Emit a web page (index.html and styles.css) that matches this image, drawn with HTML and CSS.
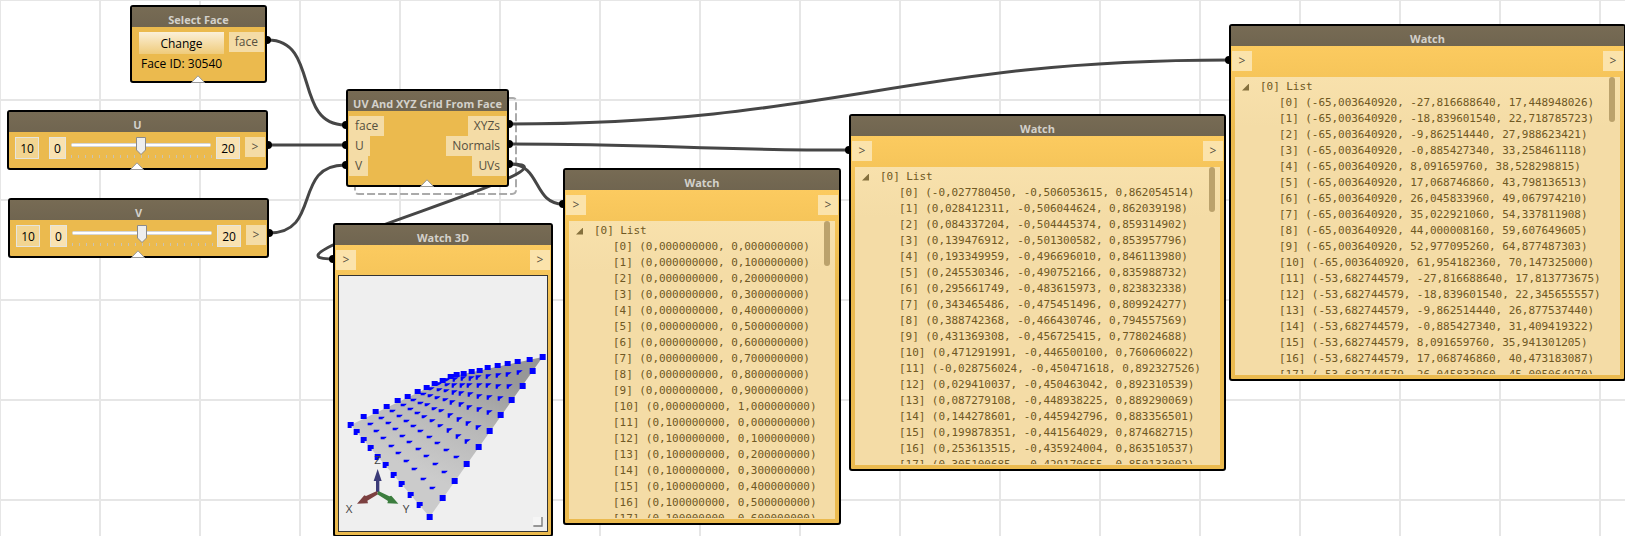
FILE: index.html
```
<!DOCTYPE html>
<html lang="en">
<head>
<meta charset="utf-8">
<title>Node graph</title>
<link rel="stylesheet" href="styles.css">
</head>
<body>
<main class="canvas">
  <svg class="wires" width="1625" height="536" viewBox="0 0 1625 536">
    <path class="selection" d="M508 98H513Q516 98 516 101V190Q516 194 512 194H359Q355 194 355 190V186"/>
    <g class="wire">
      <path d="M268 40C320 40 293 125 345 125"/>
      <path d="M268 145H345"/>
      <path d="M269 233C322 233 292 165 345 165"/>
      <path d="M510 124C834 124 905 60 1229 60"/>
      <path d="M510 144C662 144 697 150 849 150"/>
      <path d="M510 164C541 164 533 204 563 204"/>
      <path d="M510 164C599 164 242 259 333 259"/>
    </g>
    <g class="dots">
      <circle cx="267" cy="40" r="4"/><circle cx="268" cy="145" r="4"/><circle cx="269" cy="233" r="4"/>
      <circle cx="346" cy="125" r="4"/><circle cx="346" cy="145" r="4"/><circle cx="346" cy="165" r="4"/>
      <circle cx="509" cy="124" r="4"/><circle cx="509" cy="144" r="4"/><circle cx="509" cy="164" r="4"/>
      <circle cx="1229" cy="60" r="4"/><circle cx="849" cy="150" r="4"/><circle cx="563" cy="204" r="4"/><circle cx="333" cy="259" r="4"/>
    </g>
  </svg>

  <section class="node select">
    <h2 class="title">Select Face</h2>
    <div class="select-body">
      <div class="select-main"><button class="change">Change</button><p class="face-id">Face ID: 30540</p></div>
      <span class="port">face</span>
    </div>
    <svg class="lip" width="14" height="8"><path d="M.5 7.5L7 .8L13.500 7.500Z"/></svg>
  </section>

  <section class="node slider slider-u">
    <h2 class="title">U</h2>
    <div class="slider-body">
      <span class="box value">10</span><span class="box">0</span>
      <svg class="track" width="142" height="24"><rect class="rail" x=".5" y="6.500" width="139" height="3" rx="1"/><path class="ticks" d="M.5 18v3m7-3v3m7-3v3m7-3v3m7-3v3m7-3v3m7-3v3m7-3v3m7-3v3m7-3v3m7-3v3m7-3v3m7-3v3m7-3v3m7-3v3m7-3v3m7-3v3m7-3v3m7-3v3m7-3v3m7-3v3"/><path class="thumb" d="M65.500 .5h9v12.500l-4.500 4.500l-4.500-4.500Z"/></svg>
      <span class="box">20</span><span class="port arrow">&gt;</span>
    </div>
    <svg class="lip" width="14" height="8"><path d="M.5 7.5L7 .8L13.500 7.500Z"/></svg>
  </section>

  <section class="node slider slider-v">
    <h2 class="title">V</h2>
    <div class="slider-body">
      <span class="box value">10</span><span class="box">0</span>
      <svg class="track" width="142" height="24"><rect class="rail" x=".5" y="6.500" width="139" height="3" rx="1"/><path class="ticks" d="M.5 18v3m7-3v3m7-3v3m7-3v3m7-3v3m7-3v3m7-3v3m7-3v3m7-3v3m7-3v3m7-3v3m7-3v3m7-3v3m7-3v3m7-3v3m7-3v3m7-3v3m7-3v3m7-3v3m7-3v3m7-3v3"/><path class="thumb" d="M65.500 .5h9v12.500l-4.500 4.500l-4.500-4.500Z"/></svg>
      <span class="box">20</span><span class="port arrow">&gt;</span>
    </div>
    <svg class="lip" width="14" height="8"><path d="M.5 7.5L7 .8L13.500 7.500Z"/></svg>
  </section>

  <section class="node uvgrid">
    <h2 class="title">UV And XYZ Grid From Face</h2>
    <div class="ports">
      <div class="inputs"><span class="port">face</span><span class="port">U</span><span class="port">V</span></div>
      <div class="outputs"><span class="port">XYZs</span><span class="port">Normals</span><span class="port">UVs</span></div>
    </div>
    <svg class="lip" width="14" height="8"><path d="M.5 7.5L7 .8L13.500 7.500Z"/></svg>
  </section>

  <section class="node view3d bright">
    <h2 class="title">Watch 3D</h2>
    <div class="ports"><span class="port arrow">&gt;</span><span class="port arrow">&gt;</span></div>
    <div class="viewport">
      <svg width="208" height="255" viewBox="58 198 624 765">
        <defs><linearGradient id="shade" gradientUnits="userSpaceOnUse" x1="480" y1="465" x2="330" y2="800"><stop offset="0" stop-color="#979797"/><stop offset=".5" stop-color="#b8b8b8"/><stop offset="1" stop-color="#cbcbcb"/></linearGradient></defs>
        <path fill="url(#shade)" d="M93 645L393 500L669 441L330 921Z"/>
        <g id="points" fill="#00f"></g>
        <path d="M169 847V813H162L174 777L186 813H179V847Z" fill="#3b3b78"/>
        <path d="M172 843L139 858L134 856L112 881L145 880L143 872L175 853Z" fill="#7c4040"/>
        <path d="M176 843L209 859L215 857L236 881L203 880L205 873L173 853Z" fill="#3b7d3e"/>
        <g class="axis"><text x="78" y="909" textLength="20" lengthAdjust="spacingAndGlyphs">X</text><text x="249" y="909" textLength="20" lengthAdjust="spacingAndGlyphs">Y</text><text x="164" y="762" textLength="20" lengthAdjust="spacingAndGlyphs">Z</text></g>
        <path d="M640 921H668V950H640Z" fill="#f5f5f5"/><path d="M641 948H667V921" fill="none" stroke="#777" stroke-width="4"/>
      </svg>
    </div>
  </section>

  <section class="node watch bright watch-uv">
    <h2 class="title">Watch</h2>
    <div class="ports"><span class="port arrow">&gt;</span><span class="port arrow">&gt;</span></div>
    <div class="panel"><pre class="root"><i class="fold"></i>[0] List</pre><pre class="rows">[0] (0,000000000, 0,000000000)
[1] (0,000000000, 0,100000000)
[2] (0,000000000, 0,200000000)
[3] (0,000000000, 0,300000000)
[4] (0,000000000, 0,400000000)
[5] (0,000000000, 0,500000000)
[6] (0,000000000, 0,600000000)
[7] (0,000000000, 0,700000000)
[8] (0,000000000, 0,800000000)
[9] (0,000000000, 0,900000000)
[10] (0,000000000, 1,000000000)
[11] (0,100000000, 0,000000000)
[12] (0,100000000, 0,100000000)
[13] (0,100000000, 0,200000000)
[14] (0,100000000, 0,300000000)
[15] (0,100000000, 0,400000000)
[16] (0,100000000, 0,500000000)
[17] (0,100000000, 0,600000000)</pre><i class="scroll"></i></div>
  </section>

  <section class="node watch bright watch-normals">
    <h2 class="title">Watch</h2>
    <div class="ports"><span class="port arrow">&gt;</span><span class="port arrow">&gt;</span></div>
    <div class="panel"><pre class="root"><i class="fold"></i>[0] List</pre><pre class="rows">[0] (-0,027780450, -0,506053615, 0,862054514)
[1] (0,028412311, -0,506044624, 0,862039198)
[2] (0,084337204, -0,504445374, 0,859314902)
[3] (0,139476912, -0,501300582, 0,853957796)
[4] (0,193349959, -0,496696010, 0,846113980)
[5] (0,245530346, -0,490752166, 0,835988732)
[6] (0,295661749, -0,483615973, 0,823832338)
[7] (0,343465486, -0,475451496, 0,809924277)
[8] (0,388742368, -0,466430746, 0,794557569)
[9] (0,431369308, -0,456725415, 0,778024688)
[10] (0,471291991, -0,446500100, 0,760606022)
[11] (-0,028756024, -0,450471618, 0,892327526)
[12] (0,029410037, -0,450463042, 0,892310539)
[13] (0,087279108, -0,448938225, 0,889290069)
[14] (0,144278601, -0,445942796, 0,883356501)
[15] (0,199878351, -0,441564029, 0,874682715)
[16] (0,253613515, -0,435924004, 0,863510537)
[17] (0,305100685, -0,429170655, 0,850133002)</pre><i class="scroll"></i></div>
  </section>

  <section class="node watch bright watch-xyz">
    <h2 class="title">Watch</h2>
    <div class="ports"><span class="port arrow">&gt;</span><span class="port arrow">&gt;</span></div>
    <div class="panel"><pre class="root"><i class="fold"></i>[0] List</pre><pre class="rows">[0] (-65,003640920, -27,816688640, 17,448948026)
[1] (-65,003640920, -18,839601540, 22,718785723)
[2] (-65,003640920, -9,862514440, 27,988623421)
[3] (-65,003640920, -0,885427340, 33,258461118)
[4] (-65,003640920, 8,091659760, 38,528298815)
[5] (-65,003640920, 17,068746860, 43,798136513)
[6] (-65,003640920, 26,045833960, 49,067974210)
[7] (-65,003640920, 35,022921060, 54,337811908)
[8] (-65,003640920, 44,000008160, 59,607649605)
[9] (-65,003640920, 52,977095260, 64,877487303)
[10] (-65,003640920, 61,954182360, 70,147325000)
[11] (-53,682744579, -27,816688640, 17,813773675)
[12] (-53,682744579, -18,839601540, 22,345655557)
[13] (-53,682744579, -9,862514440, 26,877537440)
[14] (-53,682744579, -0,885427340, 31,409419322)
[15] (-53,682744579, 8,091659760, 35,941301205)
[16] (-53,682744579, 17,068746860, 40,473183087)
[17] (-53,682744579, 26,045833960, 45,005064970)</pre><i class="scroll"></i></div>
  </section>
</main>
<script src="points.js"></script>
</body>
</html>
```
FILE: points.js
```
// Projected positions of the points along the four edges of the surface.
const left = [[93,645],[111,666],[132,690],[153,714],[174,741],[198,765],[222,795],[246,822],[273,855],[300,885],[330,921]];
const right = [[330,921],[369,864],[405,813],[441,762],[477,711],[510,663],[543,615],[576,570],[609,528],[639,483],[669,441]];
const back = [[93,645],[132,622],[168,606],[201,590],[234,574],[264,562],[294,547],[321,535],[345,523],[369,512],[393,502]];
const top_ = [[393,502],[411,495],[432,492],[456,487],[480,482],[504,475],[534,469],[564,463],[594,457],[630,449],[669,441]];

// The surface is ruled, so every inner point is a crossing of two straight lines.
function cross([ax, ay], [bx, by], [cx, cy], [dx, dy]) {
  const m = (by - ay) / (bx - ax), n = (dy - cy) / (dx - cx);
  const x = (cy - ay + m * ax - n * cx) / (m - n);
  return [x, ay + m * (x - ax)];
}
const snap = v => Math.round(v / 3) * 3;
let d = '';
const square = ([x, y], h) => { d += `M${snap(x) - 9} ${snap(y) - 9}h18v${h}h-18Z`; };
back.slice(1).forEach(p => square(p, 15));
top_.slice(1, 10).forEach(p => square(p, 15));
right.forEach(p => square(p, 18));
left.slice(0, 10).forEach(([x, y]) => { d += `M${x - 9} ${y - 9}h18v12h-6v6h-12Z`; });
for (let i = 1; i < 10; i++) {
  for (let j = 1; j < 10; j++) {
    const [x, y] = cross(left[i], top_[i], back[j], right[j]).map(snap);
    const h = 8 + (i + j > 10 ? 4 : 0);
    d += j < 4 || i + j < 8 ? `M${x - 9} ${y - 4}h18l-3 5h-3v3h-12Z` : `M${x - 9} ${y - 5}h18l-6 5l-5 3l-1 ${h - 7}h-6Z`;
  }
}
const path = document.createElementNS('http://www.w3.org/2000/svg', 'path');
path.setAttribute('d', d);
document.getElementById('points').append(path);
```
FILE: styles.css
```
* { box-sizing: border-box; }
body { margin: 0; overflow: hidden; font: 12px "Open Sans", sans-serif; }

.canvas {
  position: relative;
  width: 1625px;
  height: 536px;
  overflow: hidden;
  background-color: #fff;
  background-image: linear-gradient(90deg, #e6e6e6 2px, transparent 2px), linear-gradient(#e6e6e6 2px, transparent 2px);
  background-size: 100px 100px;
  background-position: -1px -1px;
}
.wires { position: absolute; left: 0; top: 0; }
.wire path { fill: none; stroke: #464646; stroke-width: 3; }
.selection { fill: none; stroke: #aaa; stroke-width: 2; stroke-dasharray: 8 3; }

.node {
  position: absolute;
  border: 2px solid #000;
  border-radius: 3px;
  background: #ebba4e;
}
.bright { background: linear-gradient(#fccb60 18px, #ebba4e 110px); }
.select { left: 130px; top: 5px; width: 137px; height: 78px; }
.slider { width: 261px; height: 60px; }
.slider-u { left: 7px; top: 110px; }
.slider-v { left: 8px; top: 198px; }
.uvgrid { left: 346px; top: 89px; width: 163px; height: 98px; }
.view3d { left: 333px; top: 223px; width: 220px; height: 314px; }
.watch { height: 357px; }
.watch-uv { left: 563px; top: 168px; width: 278px; }
.watch-normals { left: 849px; top: 114px; width: 377px; }
.watch-xyz { left: 1229px; top: 24px; width: 397px; }

.title {
  margin: 0;
  height: 20px;
  padding-top: 5px;
  background: linear-gradient(#776b54, #706550);
  color: #d3d1cb;
  font-size: 11px;
  font-weight: bold;
  line-height: 15px;
  text-align: center;
  white-space: nowrap;
}
.ports { display: flex; justify-content: space-between; padding: 5px 1px 0; }
.inputs, .outputs { display: flex; flex-direction: column; align-items: flex-start; }
.outputs { align-items: flex-end; }
.port {
  height: 20px;
  padding: 0 6px;
  background: #f4dca6;
  color: #56503f;
  line-height: 20px;
}
.bright .port { background: #fbe3ab; }
.port.arrow { width: 20px; padding: 0; text-align: center; }
.lip { position: absolute; left: 50%; margin-left: -8px; bottom: -2px; }
.lip path { fill: #fff; stroke: #999; }

.select-body { display: flex; justify-content: space-between; align-items: flex-start; padding: 5px 1px 0 7px; }
.change {
  display: block;
  width: 85px;
  height: 22px;
  padding: 2px 0 0;
  border: 0;
  background: linear-gradient(#fbf0d8, #efcb7b);
  color: #000;
  font: 12px/18px "Open Sans", sans-serif;
}
.face-id { margin: 2px 0 0 2px; line-height: 16px; color: #000; white-space: nowrap; }

.slider-body { display: flex; align-items: flex-start; padding: 5px 1px 0 6px; }
.box {
  height: 22px;
  width: 24px;
  border: 1px solid #e5e5df;
  background: #f9e2b1;
  color: #000;
  line-height: 21px;
  text-align: center;
}
.box.value { background: #f2d591; }
.box + .box { width: 17px; margin: 0 5px 0 10px; }
.track { margin-right: 3px; }
.track + .box { margin-right: 5px; }
.rail { fill: #fff; stroke: #d5d5d5; }
.ticks { stroke: #c9c3b4; fill: none; }
.thumb { fill: #eee; stroke: #8a8a8a; }

.viewport { width: 210px; height: 257px; margin: 5px 0 0 3px; border: 1px solid #333; background: #efefef; }
.viewport svg { display: block; }
.axis { fill: #444; font: 35px "Open Sans", sans-serif; }

.panel {
  position: relative;
  height: 298px;
  margin: 6px 4px 0;
  border-bottom: 1px solid #f4dca6;
  overflow: hidden;
  background: linear-gradient(#f8e1ac, #f4dca6 50px);
}
.root, .rows {
  margin: 0;
  color: #6f5823;
  font: 11px/16px "DejaVu Sans Mono", monospace;
  letter-spacing: -0.06px;
}
.root { display: flex; align-items: center; padding: 2px 0 0 7px; }
.rows { padding-left: 44px; }
.fold { width: 7px; height: 7px; margin-right: 11px; background: #85703d; clip-path: polygon(100% 0, 100% 100%, 0 100%); }
.scroll { position: absolute; top: 0; right: 5px; width: 6px; height: 45px; border-radius: 3px; background: #bba26c; }
```
